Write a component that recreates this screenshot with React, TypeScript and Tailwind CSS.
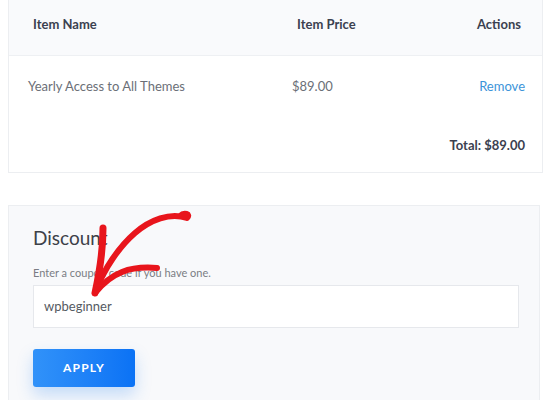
export default function App() {
  return (
    <div
      className="w-[550px] h-[400px] overflow-hidden bg-white px-2 flex flex-col gap-8"
      style={{ fontFamily: 'Lato, "Open Sans", sans-serif' }}
    >
      <div className="border border-[#eceef1] border-t-0 bg-white w-[535px]">
        <div className="h-[56px] bg-[#f9fafc] border-b border-[#eef0f3] flex pt-[15px] pl-6 pr-[21px] text-[13px] font-bold text-[#3b4150]">
          <div className="w-[264px]">Item Name</div>
          <div className="flex-1">Item Price</div>
          <div>Actions</div>
        </div>
        <div className="h-[62px] flex items-center pl-[19px] pr-[17px] text-[13px] text-[#6b6f77]">
          <div className="w-[264px]">Yearly Access to All Themes</div>
          <div className="flex-1">$89.00</div>
          <div className="text-[#3b94d9]">Remove</div>
        </div>
        <div className="h-[54px] flex items-start justify-end pt-[18px] pr-[17px] text-[13px] font-bold text-[#3b4150]">
          Total: $89.00
        </div>
      </div>

      <div className="relative bg-[#f8f9fb] border border-[#eceef1] border-b-0 w-[532px] h-[200px] pl-6 pr-5 pt-5">
        <h2 className="text-[19px] text-[#3d4148] leading-[24px]">Discount</h2>
        <p className="mt-4 text-[11px] text-[#7a7d84] leading-[14px]">
          Enter a coupon code if you have one.
        </p>
        <div className="mt-[5px] h-[43px] bg-white border border-[#e6e8ec] flex items-center px-[10px] text-[13px] text-[#555a62]">
          wpbeginner
        </div>
        <button className="mt-[21px] w-[102px] h-[38px] rounded-[3px] bg-gradient-to-r from-[#3192f9] to-[#0a72f5] text-white text-[12px] font-bold tracking-[1.2px] shadow-[0_8px_16px_rgba(40,130,245,0.25)]">
          APPLY
        </button>
      </div>

      {/* hand-drawn red arrow over the coupon field */}
      <svg
        className="absolute left-0 top-0 pointer-events-none"
        width="550"
        height="400"
        viewBox="0 0 550 400"
      >
        <g fill="none" stroke="#e8151c" strokeLinecap="round" strokeLinejoin="round">
          <path d="M180 216 C184 212 191 214 187 218 C170 212 150 220 135 233 C120 246 104 268 95 293" strokeWidth="6" />
          <path d="M103 228 C103 248 100 270 95 293" strokeWidth="7" />
          <path d="M96 292 C104 282 112 276 122 272 C132 268 145 267 157 268" strokeWidth="6" />
        </g>
      </svg>
    </div>
  )
}
